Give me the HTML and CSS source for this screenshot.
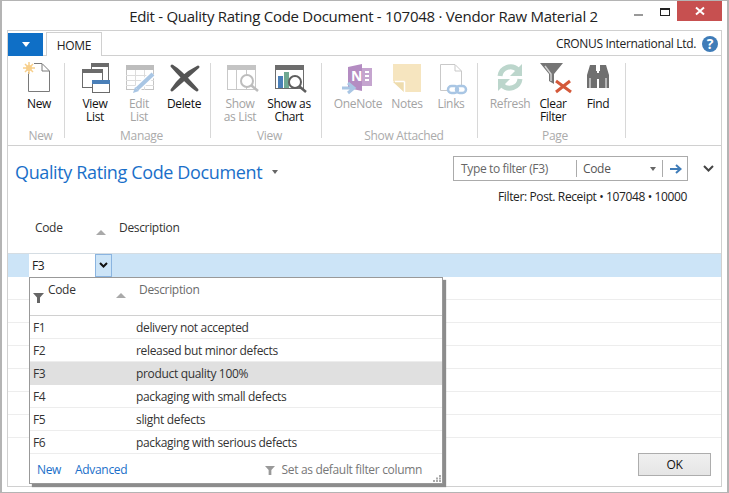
FILE: index.html
```html
<!DOCTYPE html>
<html lang="en">
<head>
  <meta charset="UTF-8">
  <title>Edit - Quality Rating Code Document</title>
  <link rel="stylesheet" href="styles.css">
</head>
<body>
  <div class="window">
    <div class="titlebar">
      <span></span>
      <div class="title">Edit - Quality Rating Code Document - 107048 · Vendor Raw Material 2</div>
      <div class="controls">
        <span class="minimize"></span>
        <span class="maximize"></span>
        <span class="close">
          <svg width="10" height="10" viewBox="0 0 10 10"><path d="M1 1.5 L9 8.5 M9 1.5 L1 8.5" stroke="#fff" stroke-width="2"/></svg>
        </span>
      </div>
    </div>

    <div class="frame">
      <div class="tabs">
        <div class="app-btn"><span class="app-caret"></span></div>
        <div class="tab">HOME</div>
        <div class="company">CRONUS International Ltd.</div>
        <div class="help">?</div>
      </div>

      <!-- Ribbon -->
      <div class="ribbon">
        <div class="group group-new">
          <div class="buttons">
            <div class="btn">
              <svg class="icon" viewBox="0 0 32 32">
                <path d="M5.5 11 V30.5 H26.5 V10 L19 2.5 H11" fill="#fff" stroke="#7a7a7a"/>
                <path d="M19 3 V10 H26" fill="none" stroke="#7a7a7a"/>
                <circle cx="6" cy="7" r="3" fill="#f7cf8b"/>
                <path d="M6 1 V13 M0 7 H12 M2 3 L10 11 M10 3 L2 11" stroke="#f7cf8b" stroke-width="1.5"/>
              </svg>
              <span>New</span>
            </div>
          </div>
          <div class="group-label">New</div>
        </div>

        <div class="group group-manage">
          <div class="buttons">
            <div class="btn">
              <svg class="icon" viewBox="0 0 32 32">
                <rect x="12.5" y="2.5" width="17" height="18" fill="#fff" stroke="#6b6b6b"/>
                <rect x="12" y="2" width="18" height="4" fill="#6b6b6b"/>
                <rect x="3.5" y="8.5" width="20" height="18" fill="#fff" stroke="#6b6b6b"/>
                <rect x="3" y="8" width="21" height="4" fill="#6b6b6b"/>
                <rect x="13.5" y="19.5" width="17" height="12" fill="#fff" stroke="#6b6b6b"/>
                <rect x="13" y="19" width="18" height="4" fill="#4a7fb8"/>
              </svg>
              <span>View<br>List</span>
            </div>
            <div class="btn off">
              <svg class="icon" viewBox="0 0 32 32">
                <rect x="3.5" y="4.5" width="27" height="24" fill="#fff" stroke="#c4c4c4"/>
                <rect x="3" y="4" width="28" height="5" fill="#bdbdbd"/>
                <path d="M3 14.5 H31 M3 19.5 H31 M3 24.5 H31 M12.5 9 V29 M21.5 9 V29" stroke="#dcdcdc"/>
                <path d="M14 28 L30 13" stroke="#fff" stroke-width="7"/>
                <path d="M14 28 L30 13" stroke="#a9c6e4" stroke-width="4"/>
                <path d="M10 32 L12 26 L16 30 Z" fill="#a9c6e4"/>
              </svg>
              <span>Edit<br>List</span>
            </div>
            <div class="btn btn-delete">
              <svg class="icon" viewBox="0 0 32 32">
                <path d="M4 5 C13 10 21 20 29 29 C21 24 12 14 4 5 Z M30 6 C20 11 10 19 4 29 C12 22 22 13 30 6 Z" fill="#555" stroke="#555" stroke-width="3" stroke-linejoin="round"/>
              </svg>
              <span>Delete</span>
            </div>
          </div>
          <div class="group-label">Manage</div>
        </div>

        <div class="group group-view">
          <div class="buttons">
            <div class="btn off">
              <svg class="icon" viewBox="0 0 32 32">
                <rect x="3.5" y="4.5" width="28" height="24" fill="#fff" stroke="#c9c9c9"/>
                <rect x="3" y="4" width="29" height="5" fill="#c4c4c4"/>
                <path d="M12.5 9 V29 M22.5 9 V29" stroke="#c9c9c9"/>
                <circle cx="23" cy="20" r="6" fill="#fff" stroke="#bdbdbd" stroke-width="2"/>
                <path d="M27.5 24.5 L34 30" stroke="#bdbdbd" stroke-width="2.5"/>
              </svg>
              <span>Show<br>as List</span>
            </div>
            <div class="btn btn-wide on">
              <svg class="icon" viewBox="0 0 32 32">
                <rect x="2.5" y="4.5" width="28" height="23" fill="#fff" stroke="#6d6d6d"/>
                <rect x="2" y="4" width="29" height="5" fill="#6d6d6d"/>
                <rect x="5" y="15" width="5" height="12" fill="#4a7fb8"/>
                <rect x="11" y="11" width="5" height="16" fill="#6fa892"/>
                <circle cx="22" cy="21" r="6" fill="#fff" stroke="#5e5e5e" stroke-width="2"/>
                <path d="M26.5 25.5 L33 31" stroke="#5e5e5e" stroke-width="2.5"/>
              </svg>
              <span>Show as<br>Chart</span>
            </div>
          </div>
          <div class="group-label">View</div>
        </div>

        <div class="group group-attached">
          <div class="buttons">
            <div class="btn btn-wide off">
              <svg class="icon" viewBox="0 0 32 32">
                <path d="M20 7 H30 V25 H20 Z" fill="#c5a5cf"/>
                <path d="M23 11 H27 M23 15 H27 M23 19 H27" stroke="#fff" stroke-width="2"/>
                <path d="M6 6 L20 3 V30 L6 27 Z" fill="#b48cc2"/>
                <text x="9" y="20" class="note-n">N</text>
                <path d="M0 27 H10 M6 22 L12 27 L6 32" fill="none" stroke="#a9c6e4" stroke-width="3"/>
              </svg>
              <span>OneNote</span>
            </div>
            <div class="btn off">
              <svg class="icon" viewBox="0 0 32 32">
                <path d="M2 3 H30 V31 H13 L2 20 Z" fill="#f6e5bf"/>
                <path d="M2 21 H13 V31 Z" fill="#eedcae"/>
                <path d="M13.500 20.500 V31 M13.500 20.500 H4" fill="none" stroke="#fff" stroke-width="1.5"/>
              </svg>
              <span>Notes</span>
            </div>
            <div class="btn off">
              <svg class="icon" viewBox="0 0 32 32">
                <path d="M5.5 26 V3.5 H20 L26.5 10 V24" fill="#fff" stroke="#c9c9c9"/>
                <path d="M20 4 V10 H26" fill="none" stroke="#c9c9c9"/>
                <path d="M5.5 26 V29.5 H13" fill="none" stroke="#c9c9c9"/>
                <rect x="13" y="25" width="10" height="7" rx="3.5" fill="#fff" stroke="#a9c6e4" stroke-width="2.5"/>
                <rect x="21" y="25" width="10" height="7" rx="3.5" fill="none" stroke="#a9c6e4" stroke-width="2.5"/>
              </svg>
              <span>Links</span>
            </div>
          </div>
          <div class="group-label">Show Attached</div>
        </div>

        <div class="group group-page">
          <div class="buttons">
            <div class="btn btn-refresh off">
              <svg class="icon" viewBox="0 0 32 32">
                <path d="M6 15 A10.5 10.5 0 0 1 24 9" fill="none" stroke="#bcd6cc" stroke-width="5"/>
                <path d="M28 3 V15 H16 Z" fill="#bcd6cc"/>
                <path d="M26 18 A10.5 10.5 0 0 1 8 24" fill="none" stroke="#bcd6cc" stroke-width="5"/>
                <path d="M4 30 V18 H16 Z" fill="#bcd6cc"/>
              </svg>
              <span>Refresh</span>
            </div>
            <div class="btn btn-clear">
              <svg class="icon" viewBox="0 0 32 32">
                <path d="M3 2 H26 L17 13 V23 L12 20 V13 Z" fill="#757575"/>
                <path d="M8 5 L14 13 V20" fill="none" stroke="#d0d0d0" stroke-width="1.5"/>
                <path d="M19 20 L34 31 M33 20 L19 31" stroke="#d4593a" stroke-width="3"/>
              </svg>
              <span>Clear<br>Filter</span>
            </div>
            <div class="btn btn-wide">
              <svg class="icon" viewBox="0 0 32 32">
                <path d="M8 4 H14 V10 H15 V27 H5 V14 Z" fill="#6f6f6f"/>
                <path d="M24 4 H18 V10 H17 V27 H27 V14 Z" fill="#6f6f6f"/>
                <rect x="14" y="12" width="4" height="6" fill="#6f6f6f"/>
                <path d="M8 17 V27 M24 17 V27" stroke="#fff"/>
              </svg>
              <span>Find</span>
            </div>
          </div>
          <div class="group-label">Page</div>
        </div>
      </div>

      <div class="page">
        <div class="page-head">
          <div class="page-title">
            <h1>Quality Rating Code Document</h1>
            <span class="caret-small"></span>
          </div>
          <div class="page-tools">
            <div class="filter-row">
              <div class="filter-box">
                <div class="filter-input">Type to filter (F3)</div>
                <div class="filter-field">Code<span class="caret-small"></span></div>
                <div class="filter-go">
                  <svg width="12" height="10" viewBox="0 0 12 10"><path d="M0 5 H10 M6 1 L10.500 5 L6 9" fill="none" stroke="#3f7cb8" stroke-width="2"/></svg>
                </div>
              </div>
              <svg class="collapse" width="11" height="7" viewBox="0 0 11 7"><path d="M1 1 L5.500 5.500 L10 1" fill="none" stroke="#444" stroke-width="2"/></svg>
            </div>
            <div class="filter-note">Filter: Post. Receipt • 107048 • 10000</div>
          </div>
        </div>

        <div class="grid-head">
          <div class="col-code">Code<span class="sort"></span></div>
          <div>Description</div>
        </div>

        <div class="row row-selected">
          <div class="cell-edit">F3</div>
          <div class="cell-drop">
            <svg width="9" height="7" viewBox="0 0 9 7"><path d="M1 1 L4.500 4.500 L8 1" fill="none" stroke="#111" stroke-width="2"/></svg>
          </div>
        </div>
        <div class="row"></div>
        <div class="row"></div>
        <div class="row"></div>
        <div class="row"></div>
        <div class="row"></div>
        <div class="row"></div>
        <div class="row"></div>

        <div class="page-foot">
          <div class="ok">OK</div>
        </div>

        <!-- Dropdown lookup -->
        <div class="popup">
          <div class="popup-head">
            <svg class="funnel" width="11" height="11" viewBox="0 0 11 11"><path d="M0 1 H11 L7 5.500 V11 L4 11 V5.500 Z" fill="#666"/></svg>
            <div class="popup-code">Code</div>
            <span class="sort"></span>
            <div class="popup-desc">Description</div>
          </div>
          <div class="popup-row"><span>F1</span><span>delivery not accepted</span></div>
          <div class="popup-row"><span>F2</span><span>released but minor defects</span></div>
          <div class="popup-row popup-row-on"><span>F3</span><span>product quality 100%</span></div>
          <div class="popup-row"><span>F4</span><span>packaging with small defects</span></div>
          <div class="popup-row"><span>F5</span><span>slight defects</span></div>
          <div class="popup-row"><span>F6</span><span>packaging with serious defects</span></div>
          <div class="popup-foot">
            <a class="link-new">New</a>
            <a>Advanced</a>
            <div class="set-default">
              <svg width="10" height="10" viewBox="0 0 11 11"><path d="M0 1 H11 L7 5.500 V11 L4 11 V5.500 Z" fill="#999"/></svg>
              Set as default filter column
            </div>
            <svg class="grip" width="9" height="7" viewBox="0 0 9 7"><path d="M7 0 H9 V2 H7 Z M4 2.500 H6 V4.500 H4 Z M7 2.500 H9 V4.500 H7 Z M1 5 H3 V7 H1 Z M4 5 H6 V7 H4 Z M7 5 H9 V7 H7 Z" fill="#aaa"/></svg>
          </div>
        </div>
      </div>
    </div>
  </div>
</body>
</html>
```

FILE: styles.css
```css
* {
  box-sizing: border-box;
}

body {
  margin: 0;
  font-family: "Open Sans", "Noto Sans", sans-serif;
  font-size: 12px;
  letter-spacing: -0.33px;
  color: #222;
  background-color: #fff;
}

.window {
  width: 729px;
  height: 493px;
  border: solid #b4b4b4;
  border-width: 1px 2px;
  display: flex;
  flex-direction: column;
  overflow: hidden;
}

/* Title bar */
.titlebar {
  height: 29px;
  flex: none;
  display: grid;
  grid-template-columns: 1fr auto 1fr;
}

.title {
  font-size: 15px;
  letter-spacing: -0.28px;
  line-height: 31px;
  padding-right: 2px;
  color: #222;
}

.controls {
  display: flex;
  justify-content: flex-end;
  align-items: flex-start;
  padding-right: 5px;
}

.minimize {
  width: 9px;
  height: 2px;
  background-color: #999;
  margin: 13px 17px 0 0;
}

.maximize {
  width: 10px;
  height: 8px;
  border: 1px solid #222;
  border-top-width: 2px;
  margin: 7px 7px 0 0;
}

.close {
  width: 45px;
  height: 20px;
  background-color: #c75050;
  display: flex;
  align-items: center;
  justify-content: center;
}

/* Inner frame */
.frame {
  flex: none;
  height: 457px;
  margin: 0 5px;
  border: 1px solid #d0d0d0;
  display: flex;
  flex-direction: column;
}

.tabs {
  height: 25px;
  flex: none;
  display: flex;
  align-items: flex-end;
  border-bottom: 1px solid #d0d0d0;
}

.app-btn {
  width: 35px;
  height: 23px;
  margin-bottom: -1px;
  background-color: #0f6fc6;
  display: flex;
  align-items: center;
  justify-content: center;
}

.app-caret {
  border: 4px solid transparent;
  border-top: 5px solid #fff;
  border-bottom: 0;
}

.tab {
  width: 56px;
  height: 24px;
  margin: 0 0 -1px 3px;
  border: 1px solid #d0d0d0;
  border-bottom: 0;
  background-color: #fff;
  text-align: center;
  line-height: 25px;
  color: #222;
}

.company {
  margin-left: auto;
  line-height: 22px;
  height: 22px;
  color: #222;
}

.help {
  width: 16px;
  height: 16px;
  margin: 0 3px 3px 6px;
  border-radius: 50%;
  background-color: #3f7cb8;
  color: #fff;
  font-weight: bold;
  font-size: 14px;
  line-height: 16px;
  text-align: center;
}

/* Ribbon */
.ribbon {
  height: 90px;
  flex: none;
  display: flex;
  align-items: flex-start;
  border-bottom: 1px solid #d0d0d0;
}

.group {
  height: 75px;
  margin-top: 7px;
  border-right: 1px solid #d8d8d8;
  display: flex;
  flex-direction: column;
  justify-content: space-between;
}

.group-new {
  width: 57px;
  padding-left: 9px;
}

.group-manage {
  width: 146px;
  padding-left: 8px;
}

.group-view {
  width: 111px;
  padding-left: 7px;
}

.group-attached {
  width: 156px;
  padding-left: 9px;
}

.group-page {
  width: 148px;
  padding-left: 7px;
}

.buttons {
  display: flex;
  margin-top: -2px;
}

.btn {
  width: 44px;
  display: flex;
  flex-direction: column;
  align-items: center;
  line-height: 13px;
  text-align: center;
  color: #111;
}

.btn span {
  margin-top: 4px;
}

.btn-wide {
  width: 54px;
}

.btn-delete {
  width: 46px;
}

.btn-refresh {
  width: 50px;
}

.btn-clear {
  width: 36px;
}

.off {
  color: #a3a3a3;
}

.icon {
  width: 32px;
  height: 32px;
  flex: none;
  overflow: visible;
}

.note-n {
  font-size: 14px;
  font-weight: bold;
  fill: #fff;
}

.group-label {
  text-align: center;
  line-height: 15px;
  margin-bottom: -5px;
  color: #ababab;
}

/* Page */
.page {
  position: relative;
  flex: 1;
}

.page-head {
  height: 64px;
  display: flex;
  justify-content: space-between;
}

.page-title {
  display: flex;
  align-items: center;
  height: 52px;
  padding-left: 7px;
}

.page-title h1 {
  margin: 0;
  font-size: 18px;
  font-weight: normal;
  color: #1a6fc9;
  letter-spacing: -0.37px;
}

.page-title .caret-small {
  margin-left: 10px;
}

.caret-small {
  display: inline-block;
  border: 3.500px solid transparent;
  border-top: 4px solid #666;
  border-bottom: 0;
}

.page-tools {
  padding-top: 10px;
  padding-right: 7px;
}

.filter-row {
  display: flex;
  align-items: center;
}

.filter-box {
  width: 235px;
  height: 25px;
  border: 1px solid #ababab;
  display: flex;
  align-items: center;
}

.filter-input {
  width: 122px;
  padding-left: 7px;
  letter-spacing: -0.36px;
  color: #666;
}

.filter-field {
  width: 87px;
  height: 17px;
  padding: 0 6px;
  border: solid #ababab;
  border-width: 0 1px;
  display: flex;
  align-items: center;
  justify-content: space-between;
  color: #555;
}

.filter-go {
  flex: 1;
  display: flex;
  justify-content: center;
  padding-left: 2px;
}

.collapse {
  margin-left: 15px;
}

.filter-note {
  margin-top: 7px;
  padding-right: 27px;
  letter-spacing: -0.38px;
  line-height: 17px;
  text-align: right;
  color: #222;
}

.grid-head {
  height: 44px;
  padding: 10px 0 0 27px;
  border-bottom: 1px solid #d5dde3;
  display: flex;
  line-height: 16px;
  color: #333;
}

.col-code {
  width: 84px;
  position: relative;
}

.sort {
  display: inline-block;
  border: 5px solid transparent;
  border-bottom: 5px solid #a9a9a9;
  border-top: 0;
}

.col-code .sort {
  position: absolute;
  left: 61px;
  top: 10px;
}

.row {
  height: 23px;
  border-bottom: 1px solid #ededed;
  display: flex;
}

.row-selected {
  background-color: #cce4f7;
  border-bottom: 0;
  padding-left: 21px;
}

.cell-edit {
  width: 66px;
  background-color: #fff;
  padding-left: 3px;
  line-height: 23px;
}

.cell-drop {
  width: 17px;
  height: 23px;
  border: 1px solid #8ab4e0;
  background-color: #cce4f7;
  display: flex;
  align-items: center;
  justify-content: center;
}

.page-foot {
  padding: 15px 10px 0 0;
  display: flex;
  justify-content: flex-end;
}

.ok {
  width: 73px;
  height: 23px;
  border: 1px solid #adadad;
  background: linear-gradient(#f0f0f0, #e5e5e5);
  text-align: center;
  line-height: 22px;
  color: #111;
}

/* Lookup popup */
.popup {
  position: absolute;
  left: 21px;
  top: 131px;
  width: 414px;
  height: 207px;
  background-color: #fff;
  border: 1px solid #999;
  box-shadow: 3px 3px 1px #8c8c8c;
  display: flex;
  flex-direction: column;
}

.popup-head {
  height: 38px;
  flex: none;
  border-bottom: 1px solid #d0d0d0;
  position: relative;
  line-height: 16px;
}

.popup-head .funnel {
  position: absolute;
  left: 3px;
  top: 14px;
}

.popup-code {
  position: absolute;
  left: 18px;
  top: 4px;
  color: #333;
}

.popup-head .sort {
  position: absolute;
  left: 86px;
  top: 15px;
}

.popup-desc {
  position: absolute;
  left: 109px;
  top: 4px;
  color: #6a6a6a;
}

.popup-row {
  height: 23px;
  flex: none;
  display: flex;
  align-items: center;
  padding-left: 3px;
  border-bottom: 1px solid #ededed;
  color: #333;
}

.popup-row span:first-child {
  width: 103px;
}

.popup-row-on {
  background-color: #e0e0e0;
  border-bottom: 0;
}

.popup-foot {
  flex: 1;
  display: flex;
  align-items: center;
  padding: 2px 20px 0 7px;
  position: relative;
  color: #1a6fc9;
}

.link-new {
  margin-right: 14px;
}

.set-default {
  margin-left: auto;
  color: #777;
  display: flex;
  align-items: center;
  gap: 6px;
}

.grip {
  position: absolute;
  right: 1px;
  bottom: 1px;
}
```
